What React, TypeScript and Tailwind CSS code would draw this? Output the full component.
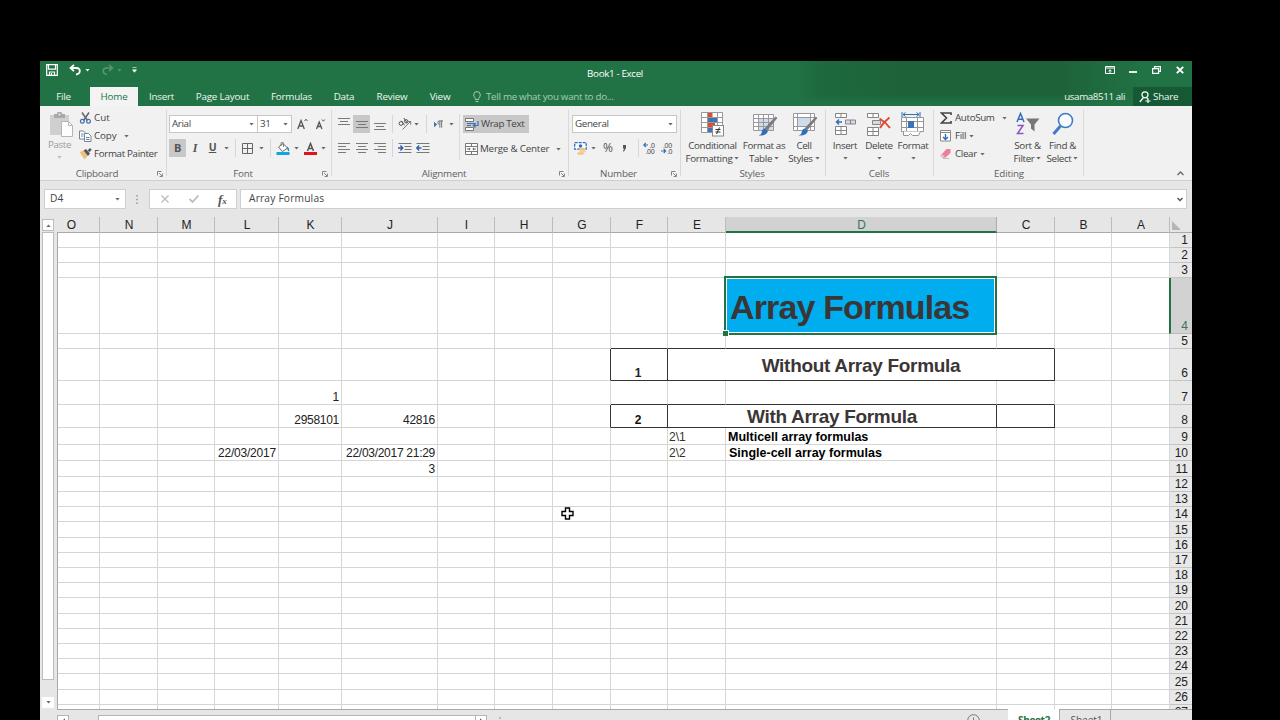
import React from "react";

type Side = "r" | "b";
type Cell = {
  text?: string;
  cls?: string;
  span?: number;
  dark?: Side[];
};

const COLS = ["O", "N", "M", "L", "K", "J", "I", "H", "G", "F", "E", "D", "C", "B", "A"];
const COL_W = [42, 58, 57, 64, 63, 96, 57, 58, 58, 57, 58, 271, 58, 57, 58];
const ROW_H = [15, 15, 15, 56, 15, 32, 24, 23, 17, 16, 16, 15, 15, 15, 16, 15, 15, 15, 15, 16, 15, 15, 15, 15, 16, 15, 5];

const num = "justify-end items-end pr-[2px] text-[12px] tracking-[-0.28px] text-[#222]";
const CELLS: Record<string, Cell> = {
  K7: { text: "1", cls: num },
  K8: { text: "2958101", cls: num },
  J8: { text: "42816", cls: num },
  L10: { text: "22/03/2017", cls: "justify-end items-end pr-[2px] text-[12px] tracking-[-0.2px] text-[#222]" },
  J10: { text: "22/03/2017 21:29", cls: num },
  J11: { text: "3", cls: num },
  F5: { dark: ["b"] },
  E5: { dark: ["b"] },
  D5: { dark: ["b"] },
  C5: { dark: ["b"] },
  G6: { dark: ["r"] },
  F6: { text: "1", cls: "justify-center items-end pr-[2px] text-[12px] font-bold text-[#222]", dark: ["r", "b"] },
  E6: { text: "Without Array Formula", cls: "justify-center items-center pt-[2px] text-[19px] tracking-[-0.3px] font-bold text-[#3b3636]", span: 3, dark: ["r", "b"] },
  F7: { dark: ["b"] },
  E7: { dark: ["b"] },
  D7: { dark: ["b"] },
  C7: { dark: ["b"] },
  G8: { dark: ["r"] },
  F8: { text: "2", cls: "justify-center items-end pr-[2px] text-[12px] font-bold text-[#111]", dark: ["r", "b"] },
  E8: { text: "With Array Formula", cls: "justify-center items-center pt-[2px] text-[19px] tracking-[-0.3px] font-bold text-[#3b3636]", span: 2, dark: ["r", "b"] },
  C8: { dark: ["r", "b"] },
  E9: { text: "2\\1", cls: "items-end pl-[1px] text-[12px] text-[#333]" },
  E10: { text: "2\\2", cls: "items-end pl-[1px] text-[12px] text-[#333]" },
  D9: { text: "Multicell array formulas", cls: "items-end pl-[2px] text-[12.5px] font-bold text-black" },
  D10: { text: "Single-cell array formulas", cls: "items-end pl-[3px] text-[12.5px] font-bold text-black" },
};

function GridCell({ cell, width }: { cell: Cell; width: number }) {
  const r = cell.dark?.includes("r") ? "border-r-[#333]" : "border-r-[#d6d6d6]";
  const b = cell.dark?.includes("b") ? "border-b-[#333]" : "border-b-[#d6d6d6]";
  return (
    <div
      className={`flex h-full shrink-0 border-r border-b leading-[14px] whitespace-nowrap ${r} ${b} ${cell.cls ?? ""}`}
      style={{ width }}
    >
      {cell.text}
    </div>
  );
}

function Selection() {
  return (
    <div className="relative h-full w-[271px] shrink-0">
      <div className="absolute -top-[2px] -left-[2px] z-10 flex h-[59px] w-[273px] items-center border-2 border-[#217346] bg-white p-px">
        <div className="flex h-full w-full items-center bg-[#00aeef] pt-[2px] pl-[3px] text-[34px] leading-none font-bold tracking-[-0.85px] whitespace-nowrap text-[#3b3636]">
          Array Formulas
        </div>
        <div className="absolute -bottom-[3px] -left-[3px] h-[6px] w-[6px] border-t border-r border-white bg-[#217346]" />
      </div>
    </div>
  );
}

function SheetRow({ index }: { index: number }) {
  const out: React.ReactNode[] = [];
  for (let c = 0; c < COLS.length; ) {
    const key = COLS[c] + (index + 1);
    const cell = CELLS[key] ?? {};
    const span = cell.span ?? 1;
    const width = COL_W.slice(c, c + span).reduce((a, b) => a + b, 0);
    out.push(key === "D4" ? <Selection key={key} /> : <GridCell key={key} cell={cell} width={width} />);
    c += span;
  }
  const active = index === 3;
  return (
    <div className="flex shrink-0" style={{ height: ROW_H[index] }}>
      {out}
      <div
        className={`flex flex-1 justify-end overflow-hidden border-b pr-[4px] text-[12px] leading-[14px] ${
          active ? "-ml-px border-l-2 border-b-[#bbb] border-l-[#217346] bg-[#d2d2d2] text-[#41705a]" : "border-b-[#c4c4c4] bg-[#e8e8e8] text-[#222]"
        } ${index === 26 ? "items-start" : "items-end"}`}
      >
        {index + 1}
      </div>
    </div>
  );
}

function Caret({ className = "" }: { className?: string }) {
  return (
    <svg viewBox="0 0 5 3" className={`h-[3px] w-[5px] shrink-0 ${className}`}>
      <path d="M0.3 0h4.4L2.5 2.6z" fill="#6a6a6a" />
    </svg>
  );
}

function Launcher() {
  return (
    <svg viewBox="0 0 6 6" className="h-[6px] w-[6px]" fill="none" stroke="#777" strokeWidth="0.9">
      <path d="M0.5 4.5v-4h4M2.2 2.2l3 3M5.4 2.6v2.9H2.6" />
    </svg>
  );
}

function Group({ width, label, launcher, shift = "", children }: { width: string; label: string; launcher?: boolean; shift?: string; children: React.ReactNode }) {
  return (
    <div className={`flex h-[74px] shrink-0 flex-col ${width}`}>
      <div className="flex h-[61px] w-full">
        <div className="min-w-0 flex-1">{children}</div>
        <div className="mt-[4px] w-px bg-[#d9d9d9]" />
      </div>
      <div className="flex h-[13px] w-full items-center">
        <div className="w-[10px]" />
        <div className={`flex-1 text-center leading-[13px] tracking-[-0.2px] text-[#606060] ${shift}`}>{label}</div>
        <div className="w-[9px]">{launcher && <Launcher />}</div>
        <div className="h-[9px] w-px self-start bg-[#d9d9d9]" />
      </div>
    </div>
  );
}

function Lines({ rows, hl }: { rows: [number, number, number][]; hl?: boolean }) {
  return (
    <span className={`flex h-[18px] w-[17px] shrink-0 items-center justify-center ${hl ? "bg-[#c8c8c8]" : ""}`}>
      <svg viewBox="0 0 12 14" className="h-[14px] w-[12px]" stroke="#7a7a7a" strokeWidth="1">
        {rows.map(([a, b, y]) => (
          <path key={y} d={`M${a} ${y}.5H${b}`} />
        ))}
      </svg>
    </span>
  );
}

function Big({ width, icon, lines, caretBelow }: { width: string; icon: React.ReactNode; lines: string[]; caretBelow?: boolean }) {
  return (
    <div className={`flex shrink-0 flex-col items-center ${width}`}>
      <div className="mt-[5px] flex h-[26px] items-center">{icon}</div>
      <div className="mt-[2px] leading-[13px] whitespace-nowrap">{lines[0]}</div>
      {lines[1] && (
        <div className="flex items-center gap-[2px] leading-[13px] whitespace-nowrap">
          {lines[1]}
          <Caret />
        </div>
      )}
      {caretBelow && <Caret className="mt-[5px]" />}
    </div>
  );
}

const brush = (
  <>
    <path d="M26 6L16 18l-2-1.500L24.500 5z" fill="#7a7a7a" stroke="#7a7a7a" strokeWidth="0.8" />
    <path d="M14 16.500l3 2.500c-1.500 4-5 5-9.500 4.500 3-1 3-2 3.500-4.500.5-1.500 1.500-2.500 3-2.500z" fill="#2f6ebd" />
  </>
);

function Clipboard() {
  return (
    <Group width="w-[127px]" label="Clipboard" launcher shift="pr-[13px]">
      <div className="flex h-full">
        <div className="flex w-[39px] flex-col items-center text-[#9b9b9b]">
          <svg viewBox="0 0 24 25" className="mt-[6px] ml-[3px] h-[25px] w-[24px]">
            <rect x="1" y="3" width="19" height="20" fill="#cfcfcf" />
            <path d="M5 2h3a2.500 2.500 0 015 0h3v4H5z" fill="#a9a9a9" />
            <circle cx="10.500" cy="2.500" r="1" fill="#eee" />
            <path d="M12.500 9.500h7l4 4v11h-11z" fill="#fdfdfd" stroke="#b5b5b5" />
            <path d="M19.500 9.500v4h4" fill="none" stroke="#b5b5b5" />
          </svg>
          <span className="mt-[1px] leading-[14px]">Paste</span>
          <Caret className="mt-[4px] opacity-40" />
        </div>
        <div className="flex flex-col pt-[3px]">
          <div className="flex h-[18px] items-center tracking-[0px]">
            <svg viewBox="0 0 13 12" className="mr-[2px] h-[12px] w-[13px]" fill="none">
              <path d="M3 0.500l5.500 8M10 0.500l-5.500 8" stroke="#666" strokeWidth="1.500" />
              <circle cx="3.300" cy="9.300" r="1.900" stroke="#4a6fae" strokeWidth="1.200" />
              <circle cx="9.500" cy="9.300" r="1.900" stroke="#4a6fae" strokeWidth="1.200" />
            </svg>
            Cut
          </div>
          <div className="flex h-[18px] items-center tracking-[-0.1px]">
            <svg viewBox="0 0 13 12" className="mr-[2px] h-[12px] w-[13px]" fill="#fff" stroke="#6b7686" strokeWidth="0.9">
              <path d="M0.500 1h4l2 2v6h-6z" />
              <path d="M5.500 3.500h4l2.500 2.500v5.500H5.500z" />
              <path d="M2 4h2.500M2 6h2.500M7 7.500h3.500M7 9.500h3.500" stroke="#4a7cc0" />
            </svg>
            Copy
            <Caret className="ml-[7px]" />
          </div>
          <div className="flex h-[18px] items-center">
            <svg viewBox="0 0 13 12" className="mr-[2px] h-[12px] w-[13px]">
              <path d="M0.500 4l4-1.500 4.500 5-3.500 4z" fill="#ecc27c" />
              <path d="M4.500 2.500l2.500-1.500 4 4.500-2 2.500z" fill="#555" />
              <path d="M8.500 2.500L11 0l1.700 1.700L10.500 4z" fill="#555" />
            </svg>
            Format Painter
          </div>
        </div>
      </div>
    </Group>
  );
}

function FontGroup() {
  return (
    <Group width="w-[165px]" label="Font" launcher shift="pr-[13px]">
      <div className="flex h-full flex-col pl-[2px]">
        <div className="mt-[9px] flex h-[18px] items-center">
          <div className="flex h-[18px] w-[89px] items-center justify-between border border-[#c6c6c6] bg-white pr-[3px] pl-[2px]">
            Arial
            <Caret />
          </div>
          <div className="-ml-px flex h-[18px] w-[35px] items-center justify-between border border-[#c6c6c6] bg-white pr-[3px] pl-[2px]">
            31
            <Caret />
          </div>
          <svg viewBox="0 0 30 12" className="ml-[5px] h-[12px] w-[30px]" fill="none" stroke="#555" strokeWidth="1.300">
            <path d="M0.800 11L4 2.500 7.300 11M2 8h4.200" />
            <path d="M7.500 3l1.500-1.800L10.500 3" strokeWidth="1" />
            <path d="M19.500 11l2.700-7 2.700 7M20.500 8.500h3.500" />
            <path d="M25 1.500l1.400 1.700L27.800 1.500" strokeWidth="1" />
          </svg>
        </div>
        <div className="mt-[6px] flex h-[18px] items-center text-[#555]">
          <span className="flex h-[18px] w-[17px] items-center justify-center bg-[#c8c8c8] text-[11px] font-bold">B</span>
          <span className="w-[18px] text-center font-['Liberation_Serif',serif] text-[12px] font-bold italic">I</span>
          <span className="w-[17px] text-center text-[10.5px] font-bold underline">U</span>
          <Caret className="ml-[3px]" />
          <span className="ml-[6px] h-[18px] w-px bg-[#d6d6d6]" />
          <svg viewBox="0 0 11 11" className="ml-[6px] h-[11px] w-[11px]" fill="none" stroke="#666">
            <path d="M0.500 0.500h10v10h-10zM5.500 0.500v10M0.500 5.500h10" />
          </svg>
          <Caret className="ml-[6px]" />
          <span className="ml-[6px] h-[18px] w-px bg-[#d6d6d6]" />
          <svg viewBox="0 0 14 13" className="ml-[5px] h-[13px] w-[14px]">
            <path d="M2.500 5L7 1.500 11.500 6 6.500 9.500z" fill="#fff" stroke="#666" />
            <path d="M5 4V1.500a1.200 1.200 0 012.500 0V5" fill="none" stroke="#666" strokeWidth="0.800" />
            <path d="M11 4.500c2 1 2.500 3 2 5-1.500-1-2-2.500-2-5z" fill="#3a78c0" />
            <rect x="0.500" y="10" width="13" height="3" fill="#10a5e4" />
          </svg>
          <Caret className="ml-[4px]" />
          <svg viewBox="0 0 13 13" className="ml-[5px] h-[13px] w-[13px]">
            <path d="M3.500 9L6.500 1.500 9.500 9M4.500 6.500h4" fill="none" stroke="#555" strokeWidth="1.500" />
            <rect y="10" width="13" height="3" fill="#e3111c" />
          </svg>
          <Caret className="ml-[4px]" />
        </div>
      </div>
    </Group>
  );
}

function Indent({ flip }: { flip?: boolean }) {
  return (
    <svg viewBox="0 0 14 12" className="h-[12px] w-[14px]" fill="none">
      <path d="M0.500 1.500h13M6.500 4.500h7M6.500 7.500h7M0.500 10.500h13" stroke="#777" />
      <path d={flip ? "M5.500 6H1M3.200 3.500L0.800 6l2.400 2.500" : "M0 6h4.500M2.400 3.500L4.800 6 2.400 8.500"} stroke="#2f5fae" strokeWidth="1.400" />
    </svg>
  );
}

function Alignment() {
  return (
    <Group width="w-[237px]" label="Alignment" launcher shift="pr-[13px]">
      <div className="flex h-full">
        <div className="flex w-[127px] flex-col pl-[3px]">
          <div className="mt-[9px] flex h-[18px] items-center">
            <Lines rows={[[0, 12, 1], [2, 10, 4], [0, 12, 7]]} />
            <span className="w-px" />
            <Lines hl rows={[[0, 12, 4], [2, 10, 7], [0, 12, 10]]} />
            <span className="w-px" />
            <Lines rows={[[0, 12, 6], [2, 10, 9], [0, 12, 12]]} />
            <span className="ml-[4px] h-[18px] w-px bg-[#d6d6d6]" />
            <svg viewBox="0 0 14 14" className="ml-[5px] h-[14px] w-[14px]" fill="none" stroke="#555">
              <circle cx="3" cy="6.500" r="1.900" />
              <path d="M3.500 3.800l3 4.500M5.800 1l3.500 5.200" />
              <circle cx="8.200" cy="4.300" r="1.700" />
              <path d="M4.500 12.500l8-8M9.500 4.500h3.200v3.200" stroke="#777" />
            </svg>
            <Caret className="ml-[2px]" />
            <span className="ml-[7px] h-[18px] w-px bg-[#d6d6d6]" />
            <svg viewBox="0 0 11 10" className="ml-[6px] h-[9px] w-[11px]">
              <path d="M0.500 2v6L4 5z" fill="#3a6fb8" />
              <path d="M7 1v7.500M9 1v7.500M10.500 1H6.500a1.700 1.700 0 000 3.600" fill="none" stroke="#666" />
            </svg>
            <Caret className="ml-[5px]" />
          </div>
          <div className="mt-[6px] flex h-[18px] items-center">
            <Lines rows={[[0, 12, 2], [0, 8, 5], [0, 12, 8], [0, 8, 11]]} />
            <span className="w-px" />
            <Lines rows={[[0, 12, 2], [2, 10, 5], [0, 12, 8], [2, 10, 11]]} />
            <span className="w-px" />
            <Lines rows={[[0, 12, 2], [4, 12, 5], [0, 12, 8], [4, 12, 11]]} />
            <span className="ml-[4px] h-[18px] w-px bg-[#d6d6d6]" />
            <span className="ml-[5px] flex gap-[4px]">
              <Indent />
              <Indent flip />
            </span>
          </div>
        </div>
        <div className="mt-[8px] h-[46px] w-px bg-[#dadada]" />
        <div className="flex flex-col pl-[3px]">
          <div className="mt-[9px] flex h-[18px] w-[66px] items-center bg-[#c8c8c8] pl-[2px] whitespace-nowrap">
            <svg viewBox="0 0 14 13" className="mr-[2px] h-[13px] w-[14px]" fill="none">
              <path d="M0.500 0.500h8v3h-8zM0.500 9.500h8v3h-8z" fill="#fff" stroke="#777" />
              <path d="M2 5.500h9M2 7.500h4" stroke="#3a6fb8" />
              <path d="M13 3v4.500H8.500M10.500 5.500l-2.200 2 2.200 2" stroke="#3a6fb8" strokeWidth="1.200" />
            </svg>
            Wrap Text
          </div>
          <div className="mt-[7px] flex h-[18px] items-center pl-[2px] whitespace-nowrap">
            <svg viewBox="0 0 13 12" className="mr-[2px] h-[12px] w-[13px]" fill="#fff" stroke="#777">
              <path d="M0.500 0.500h12v11h-12zM0.500 3.500h12M0.500 8.500h12M6.500 0.500v3M6.500 8.500v3" />
              <path d="M2 6h3M11 6H8M4 5l1.200 1L4 7M9 5L7.800 6 9 7" stroke="#555" strokeWidth="0.900" fill="none" />
            </svg>
            <span className="w-[69px] tracking-[-0.2px]">Merge &amp; Center</span>
            <Caret className="ml-[7px]" />
          </div>
        </div>
      </div>
    </Group>
  );
}

function NumberGroup() {
  return (
    <Group width="w-[112px]" label="Number" launcher shift="pr-[13px]">
      <div className="flex h-full flex-col pl-[3px]">
        <div className="mt-[9px] flex h-[18px] w-[105px] items-center justify-between border border-[#c6c6c6] bg-white pr-[3px] pl-[2px]">
          General
          <Caret />
        </div>
        <div className="mt-[6px] flex h-[18px] items-center text-[#555]">
          <svg viewBox="0 0 13 13" className="ml-[2px] h-[13px] w-[13px]">
            <rect x="0.700" y="0.700" width="11.500" height="6.500" fill="#fff" stroke="#2f6ebd" strokeWidth="1.300" strokeDasharray="3 1" />
            <circle cx="6.500" cy="4" r="1.800" fill="#2f6ebd" />
            <ellipse cx="8.500" cy="7.500" rx="3.500" ry="1.300" fill="#f0c47a" />
            <ellipse cx="8.500" cy="9.500" rx="3.500" ry="1.200" fill="#f3d39c" />
            <ellipse cx="6.500" cy="11.500" rx="3.500" ry="1.200" fill="#f0c47a" />
          </svg>
          <Caret className="ml-[4px]" />
          <span className="ml-[7px] w-[12px] text-[12px]">%</span>
          <svg viewBox="0 0 5 7" className="ml-[7px] h-[7px] w-[5px]">
            <path d="M1 0h3v3L2 6.500H1L2 3.500H1z" fill="#555" />
          </svg>
          <span className="ml-[11px] h-[18px] w-px bg-[#d6d6d6]" />
          <svg viewBox="0 0 30 12" className="ml-[4px] h-[12px] w-[30px] font-['Liberation_Sans',sans-serif] text-[7px]" fill="#444">
            <text x="6.500" y="5.500">.0</text>
            <text x="2.500" y="11.500">.00</text>
            <path d="M5 3H0.800M2.800 1L0.800 3l2 2" fill="none" stroke="#2f6ebd" strokeWidth="1.100" />
            <text x="20" y="5.500">.00</text>
            <text x="24" y="11.500">.0</text>
            <path d="M18 9h4.500M20.700 7l2 2-2 2" fill="none" stroke="#2f6ebd" strokeWidth="1.100" />
          </svg>
        </div>
      </div>
    </Group>
  );
}

function Styles() {
  return (
    <Group width="w-[145px]" label="Styles" shift="pr-[3px]">
      <div className="flex h-full">
        <Big
          width="w-[63px]"
          lines={["Conditional", "Formatting"]}
          icon={
            <svg viewBox="0 0 25 25" className="h-[25px] w-[25px]">
              <path d="M1.500 0.500h21v20h-21zM1.500 5.500h21M1.500 10.500h21M1.500 15.500h21M7.500 0.500v20M17.500 0.500v20" fill="#fff" stroke="#999" />
              <rect x="8" y="1" width="4.500" height="4" fill="#d9502f" />
              <rect x="8" y="6" width="9" height="4" fill="#3b74b9" />
              <rect x="8" y="11" width="7" height="4" fill="#d9502f" />
              <rect x="8" y="16" width="4" height="4" fill="#3b74b9" />
              <rect x="12.500" y="13.500" width="11" height="10.500" fill="#fff" stroke="#888" />
              <path d="M15.500 17.500h5M15.500 20h5M19.500 15.500l-3 6.500" stroke="#333" fill="none" />
            </svg>
          }
        />
        <Big
          width="w-[40px]"
          lines={["Format as", "Table"]}
          icon={
            <svg viewBox="0 0 27 25" className="h-[25px] w-[27px]">
              <path d="M2.500 2.500h20v16h-20z" fill="#fff" stroke="#999" />
              <rect x="8" y="7" width="14" height="11" fill="#cfdcec" />
              <path d="M2.500 6.500h20M2.500 10.500h20M2.500 14.500h20M7.500 2.500v16M12.500 2.500v16M17.500 2.500v16" fill="none" stroke="#999" />
              {brush}
            </svg>
          }
        />
        <Big
          width="w-[40px]"
          lines={["Cell", "Styles"]}
          icon={
            <svg viewBox="0 0 27 25" className="h-[25px] w-[27px]">
              <path d="M2.500 1.500h21v17h-21z" fill="#fff" stroke="#999" />
              <path d="M2.500 5.500h21M2.500 14.500h21M6.500 1.500v17M19.500 1.500v17" fill="none" stroke="#999" />
              <rect x="7" y="6" width="12" height="8" fill="#cddbea" />
              {brush}
            </svg>
          }
        />
      </div>
    </Group>
  );
}

function CellsGroup() {
  return (
    <Group width="w-[108px]" label="Cells" shift="pr-[2px]">
      <div className="flex h-full pl-[2px]">
        <Big
          width="w-[34px]"
          lines={["Insert"]}
          caretBelow
          icon={
            <svg viewBox="0 0 21 23" className="h-[23px] w-[21px]" fill="#fff" stroke="#858585">
              <path d="M0.500 0.500h11v4h-11zM6 0.500v4M0.500 13.500h11v8h-11zM6 13.500v8M0.500 17.500h11" />
              <path d="M10.500 7h10v4h-10zM15.500 7v4" fill="#d3d9ea" />
              <path d="M7 9H1.500M4 6.500L1.500 9 4 11.500" fill="none" stroke="#2f6ebd" strokeWidth="1.500" />
            </svg>
          }
        />
        <Big
          width="w-[34px]"
          lines={["Delete"]}
          caretBelow
          icon={
            <svg viewBox="0 0 24 23" className="h-[23px] w-[24px]" fill="#fff" stroke="#858585">
              <path d="M0.500 0.500h11v4h-11zM6 0.500v4M0.500 14.500h11v8h-11zM6 14.500v8M0.500 18.500h11" />
              <path d="M5.500 7.500h8v4h-8z" fill="#cfdcec" />
              <path d="M12.500 5.500c4 2.500 8 6 10.500 9.500M22.500 4.500c-4 3-7.500 7-9.500 10.500" fill="none" stroke="#dd4a2e" strokeWidth="2" />
            </svg>
          }
        />
        <Big
          width="w-[34px]"
          lines={["Format"]}
          caretBelow
          icon={
            <svg viewBox="0 0 24 25" className="h-[25px] w-[24px]" fill="#fff" stroke="#969696">
              <path d="M0.500 5.500h22v14h-22zM0.500 9.500h22M0.500 15.500h22M5.500 5.500v14M16.500 5.500v14" />
              <path d="M2.500 19.500v4h5l2-2 2 2h6l2-4" />
              <rect x="7" y="9" width="6" height="7" fill="#3b74b9" stroke="none" />
              <path d="M2 2.500h16M4.500 0.500L2 2.500l2.500 2M15.500 0.500L18 2.500l-2.500 2M1 0v5M19 0v5" fill="none" stroke="#2f6ebd" />
            </svg>
          }
        />
      </div>
    </Group>
  );
}

function Editing() {
  return (
    <Group width="w-[150px]" label="Editing" shift="">
      <div className="flex h-full pl-[6px]">
        <div className="flex w-[70px] flex-col pt-[3px]">
          <div className="flex h-[18px] items-center">
            <svg viewBox="0 0 12 12" className="mr-[3px] h-[12px] w-[12px]" fill="none" stroke="#444" strokeWidth="1.600">
              <path d="M11 3V1H1.500l5 5-5 5H11V9" />
            </svg>
            <span className="w-[42px]">AutoSum</span>
            <Caret className="ml-[5px]" />
          </div>
          <div className="flex h-[18px] items-center">
            <svg viewBox="0 0 12 12" className="mr-[3px] h-[12px] w-[12px]" fill="#fff" stroke="#888">
              <path d="M0.500 0.500h10v10.500h-10zM0.500 2.500h10" />
              <path d="M5.500 4v5.500M3 7l2.500 2.500L8 7" stroke="#2f6ebd" strokeWidth="1.400" fill="none" />
            </svg>
            Fill
            <Caret className="ml-[3px]" />
          </div>
          <div className="flex h-[18px] items-center">
            <svg viewBox="0 0 12 12" className="mr-[3px] h-[12px] w-[12px]">
              <path d="M6.500 1h4v4L5.500 9.500 2 6z" fill="#ee7f9c" />
              <path d="M2 6l3.500 3.500H2.500L0.800 7.500z" fill="#f7c3cf" stroke="#e889a0" strokeWidth="0.600" />
              <path d="M3 10.500h6" stroke="#aaa" strokeWidth="0.700" />
            </svg>
            Clear
            <Caret className="ml-[3px]" />
          </div>
        </div>
        <Big
          width="w-[35px]"
          lines={["Sort &", "Filter"]}
          icon={
            <svg viewBox="0 0 24 24" className="h-[24px] w-[24px]" fill="none">
              <path d="M1 10L4.500 1.500 8 10M2.200 7.200h4.600" stroke="#2f6ebd" strokeWidth="1.500" />
              <path d="M1.500 13.500H7l-5.500 8h6" stroke="#8a55c0" strokeWidth="1.500" />
              <path d="M10 6.500h13.500l-5 6v7l-3.500-3v-4z" fill="#777" />
            </svg>
          }
        />
        <Big
          width="w-[35px]"
          lines={["Find &", "Select"]}
          icon={
            <svg viewBox="0 0 24 24" className="h-[24px] w-[24px]" fill="none" stroke="#3f7cc4">
              <circle cx="14.500" cy="8.500" r="7" strokeWidth="1.600" fill="#fafcff" />
              <path d="M9.500 14l-7 8" strokeWidth="3" />
            </svg>
          }
        />
      </div>
    </Group>
  );
}

function TitleBar() {
  return (
    <div className="flex h-[26px] justify-between text-white">
      <div className="flex h-[18px] flex-1 items-center pl-[6px]">
        <svg viewBox="0 0 12 12" className="h-[12px] w-[12px]" fill="none" stroke="#fff" strokeWidth="1.200">
          <path d="M0.700 0.700h10.600v10.600H0.700zM2.500 0.700v4.500h7V0.700M3.500 11V8h5v3M5.500 9v2" />
        </svg>
        <svg viewBox="0 0 13 12" className="ml-[11px] h-[12px] w-[13px]" fill="none" stroke="#fff" strokeWidth="1.800">
          <path d="M5 0.800L1.500 4 5 7.200M2 4h5.500c4.500 0 4.500 6-0.500 6.500" />
        </svg>
        <svg viewBox="0 0 5 3" className="ml-[3px] h-[3px] w-[5px]"><path d="M0.500 0h4L2.500 2.500z" fill="#fff" /></svg>
        <svg viewBox="0 0 13 12" className="ml-[11px] h-[12px] w-[13px] opacity-25" fill="none" stroke="#fff" strokeWidth="1.600">
          <path d="M8 1l3.500 3L8 7M11 4H5.500c-4.500 0-4.500 6 0.500 6.500" />
        </svg>
        <svg viewBox="0 0 5 3" className="ml-[3px] h-[3px] w-[5px] opacity-25"><path d="M0.500 0h4L2.500 2.500z" fill="#fff" /></svg>
        <svg viewBox="0 0 5 6" className="ml-[10px] h-[6px] w-[5px]"><path d="M0.500 0.500h4M0.500 2.800h4L2.500 5.300z" fill="#fff" stroke="#fff" strokeWidth="0.600" /></svg>
      </div>
      <div className="pt-[6px] leading-[14px]">Book1 - Excel</div>
      <div className="flex h-[18px] flex-1 items-center justify-end pr-[8px]">
        <svg viewBox="0 0 10 8" className="h-[8px] w-[10px]" fill="none" stroke="#fff">
          <path d="M0.500 0.500h9v7h-9zM0.500 2h9M5 7V3.800M3.500 5.200L5 3.800l1.500 1.400" />
        </svg>
        <span className="mt-[3px] ml-[14px] h-[2px] w-[8px] bg-white/90" />
        <svg viewBox="0 0 9 8" className="ml-[15px] h-[8px] w-[9px]" fill="none" stroke="#fff" strokeWidth="1.200">
          <path d="M0.600 2.600h6v4.800h-6zM2.500 2.500V0.700h6v4.600H6.700" />
        </svg>
        <svg viewBox="0 0 8 8" className="ml-[15px] h-[8px] w-[8px]" stroke="#fff" strokeWidth="1.900">
          <path d="M0.800 0.800l6.400 6.400M7.200 0.800L0.800 7.200" />
        </svg>
      </div>
    </div>
  );
}

const TABS: [string, string][] = [
  ["Insert", "w-[47px]"],
  ["Page Layout", "w-[75px]"],
  ["Formulas", "w-[63px]"],
  ["Data", "w-[42px]"],
  ["Review", "w-[54px]"],
  ["View", "w-[42px]"],
];

function TabRow() {
  return (
    <div className="flex h-[19px] items-stretch text-center leading-[19px] tracking-[-0.2px] whitespace-nowrap text-[#eef6f1]">
      <div className="mr-[3px] w-[47px]">File</div>
      <div className="w-[48px] bg-[#f3f3f3] text-[#217346]">Home</div>
      {TABS.map(([t, w]) => (
        <div key={t} className={w}>{t}</div>
      ))}
      <div className="flex items-center pl-[12px] text-[#a6cdb6]">
        <svg viewBox="0 0 8 12" className="mr-[5px] h-[12px] w-[8px]" fill="none" stroke="#a6cdb6">
          <path d="M2.500 8.500C2.500 6.500 0.700 6 0.700 3.900a3.300 3.300 0 016.600 0C7.300 6 5.500 6.500 5.500 8.500zM2.500 10.500h3" />
        </svg>
        <span className="tracking-[-0.3px]">Tell me what you want to do...</span>
      </div>
      <div className="ml-auto pr-[8px] tracking-[-0.4px]">usama8511 ali</div>
      <div className="flex w-[59px] items-center bg-[#155a35] pl-[6px]">
        <svg viewBox="0 0 12 12" className="mr-[2px] h-[12px] w-[12px]" fill="none" stroke="#fff" strokeWidth="1.200">
          <circle cx="6" cy="3.800" r="3" />
          <path d="M4.500 6.500L0.800 11M7.500 6.500l1.500 1.500M6.500 10h5M9 7.500v4.500" />
        </svg>
        Share
      </div>
    </div>
  );
}

function FormulaBar() {
  return (
    <div className="flex h-[36px] items-start bg-[#e6e6e6] pt-[8px] pl-[4px] text-[10.2px] tracking-[0px]">
      <div className="flex h-[20px] w-[82px] items-center justify-between border border-[#cfcfcf] bg-white pr-[5px] pl-[5px]">
        D4
        <Caret />
      </div>
      <svg viewBox="0 0 2 9" className="mt-[6px] ml-[10px] h-[9px] w-[2px]" fill="#aaa">
        <path d="M0 0h2v1.500H0zM0 3.700h2v1.500H0zM0 7.500h2V9H0z" />
      </svg>
      <div className="ml-[11px] flex h-[20px] w-[88px] items-center border border-[#cfcfcf] bg-white">
        <svg viewBox="0 0 8 8" className="ml-[11px] h-[8px] w-[8px]" stroke="#bdbdbd" strokeWidth="1.400"><path d="M0.500 0.500l7 7M7.500 0.500l-7 7" /></svg>
        <svg viewBox="0 0 10 8" className="ml-[20px] h-[8px] w-[10px]" fill="none" stroke="#bdbdbd" strokeWidth="1.800"><path d="M0.500 4l3 3 6-6.500" /></svg>
        <span className="ml-[19px] font-['Liberation_Serif',serif] text-[13px] leading-none font-bold text-[#555] italic">f<span className="text-[9px]">x</span></span>
      </div>
      <div className="ml-[3px] flex h-[20px] w-[947px] items-center justify-between border border-[#cfcfcf] bg-white pr-[3px] pl-[8px]">
        <span className="tracking-[0.2px]">Array Formulas</span>
        <svg viewBox="0 0 6 5" className="h-[5px] w-[6px]" fill="none" stroke="#555" strokeWidth="1.500"><path d="M0.500 1L3 3.500 5.500 1" /></svg>
      </div>
    </div>
  );
}

function VScroll() {
  return (
    <div className="flex h-full w-[17px] shrink-0 flex-col bg-[#e6e6e6] pl-[2px]">
      <div className="mt-[2px] flex h-[12px] w-[12px] items-center justify-center border border-[#bdbdbd] bg-white"><Caret className="rotate-180" /></div>
      <div className="mt-px h-[448px] w-[12px] border border-[#bdbdbd] bg-white" />
      <div className="mt-auto mb-px flex h-[11px] w-[12px] items-center justify-center bg-white"><Caret /></div>
    </div>
  );
}

function Sheet() {
  return (
    <div className="flex h-[492px] shrink-0 font-['Liberation_Sans',Arial,sans-serif] tracking-[0px]">
      <VScroll />
      <div className="relative flex w-[1135px] flex-col">
        <div className="flex h-[16px] shrink-0 border-b border-[#a9a9a9] bg-[#e6e6e6] pl-px text-[12px] leading-[17px] text-[#222]">
          {COLS.map((c, i) => (
            <div
              key={c}
              className={`h-[16px] shrink-0 pl-px text-center ${
                c === "D" ? "border-r border-b-2 border-r-[#aaa] border-b-[#217346] bg-[#d2d2d2] text-[#41705a]" : "border-r border-[#bcbcbc]"
              } ${c === "O" ? "pr-[15px]" : ""}`}
              style={{ width: COL_W[i] }}
            >
              {c}
            </div>
          ))}
          <svg viewBox="0 0 9 9" className="mt-[4px] ml-[2px] h-[9px] w-[9px]"><path d="M0 0v9h9z" fill="#b5b5b5" /></svg>
        </div>
        <div className="flex h-[476px] flex-col overflow-hidden border-l border-[#a9a9a9] bg-white">
          {ROW_H.map((_, i) => (
            <SheetRow key={i} index={i} />
          ))}
        </div>
        <svg viewBox="0 0 13 13" className="absolute top-[290px] left-[504px] h-[13px] w-[13px]">
          <path d="M4.500 1h4v3.500H12v4H8.500V12h-4V8.500H1v-4h3.500z" fill="#fff" stroke="#000" strokeWidth="1.400" />
        </svg>
      </div>
    </div>
  );
}

function BottomBar() {
  return (
    <div className="flex h-[11px] shrink-0 overflow-hidden bg-[#e6e6e6] text-[10px] tracking-[-0.3px] whitespace-nowrap">
      <div className="h-full w-[17px]" />
      <div className="flex h-full w-[951px] border-t border-[#a9a9a9] pt-[5px]">
        <div className="flex h-[12px] w-[12px] justify-center border border-[#b5b5b5] bg-white pt-[3px]"><Caret className="rotate-90" /></div>
        <div className="ml-[29px] h-[12px] w-[378px] border border-[#b5b5b5] bg-white" />
        <div className="-ml-px flex h-[12px] w-[12px] justify-center border border-[#b5b5b5] bg-white pt-[3px]"><Caret className="-rotate-90" /></div>
        <span className="mt-[2px] ml-[12px] h-[2px] w-[2px] bg-[#bbb]" />
        <svg viewBox="0 0 13 13" className="-mt-[1px] ml-[466px] h-[13px] w-[13px] shrink-0" fill="none" stroke="#777">
          <circle cx="6.500" cy="6.500" r="5.800" />
          <path d="M6.500 3.500v6M3.500 6.500h6" />
        </svg>
      </div>
      <div className="h-[20px] w-[51px] bg-white pt-[4px] pl-px text-center leading-[14px] font-bold text-[#217346]">Sheet2</div>
      <div className="h-[20px] w-[52px] border-t border-r border-l border-[#a9a9a9] pt-[3px] pl-[3px] text-center leading-[14px] tracking-[0px] text-[#555]">Sheet1</div>
      <div className="h-full flex-1 border-t border-[#a9a9a9]" />
    </div>
  );
}

export default function App() {
  return (
    <div className="h-[720px] w-[1280px] overflow-hidden bg-black pt-[61px] pl-[40px]">
      <div className="flex h-[659px] w-[1152px] flex-col overflow-hidden bg-[#e6e6e6] font-['Open_Sans','Noto_Sans',sans-serif] text-[9.8px] tracking-[-0.35px] text-[#444]">
        <div className="h-[45px] shrink-0 bg-[linear-gradient(180deg,#21734600_34px,#217346_43px),linear-gradient(90deg,#217346_0,#217346_755px,#1e693e_780px,#1d6339_860px,#1d6339_1020px,#217346_1110px)]">
          <TitleBar />
          <TabRow />
        </div>
        <div className="flex h-[75px] shrink-0 border-b border-[#cfcfcf] bg-[#f1f1f1]">
          <Clipboard />
          <FontGroup />
          <Alignment />
          <NumberGroup />
          <Styles />
          <CellsGroup />
          <Editing />
          <div className="flex flex-1 items-end justify-end pr-[8px] pb-[4px]">
            <svg viewBox="0 0 7 5" className="h-[5px] w-[7px]" fill="none" stroke="#666" strokeWidth="1.300"><path d="M0.500 4l3-3 3 3" /></svg>
          </div>
        </div>
        <FormulaBar />
        <Sheet />
        <BottomBar />
      </div>
    </div>
  );
}
